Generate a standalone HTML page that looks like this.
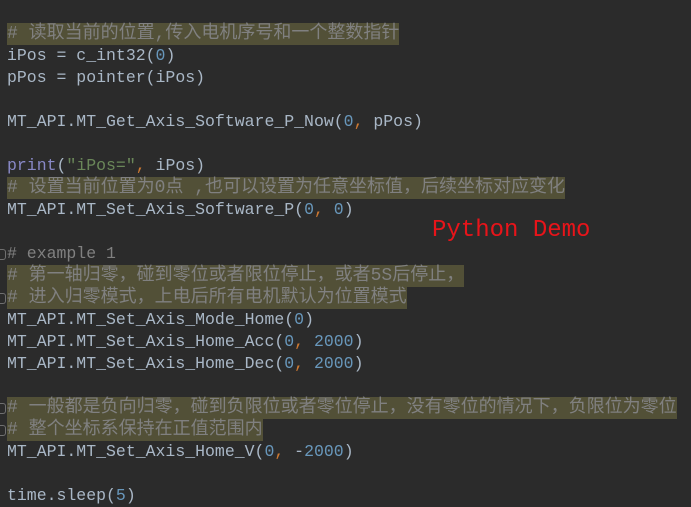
<!DOCTYPE html>
<html><head><meta charset="utf-8"><style>
html,body{margin:0;padding:0;background:#2b2b2b;width:691px;height:507px;overflow:hidden}
.code{position:absolute;left:7px;top:23px;font-family:"Liberation Mono","Noto Sans CJK SC",monospace;font-size:16.5px;line-height:22px;color:#a9b7c6}
.l{height:22px;white-space:pre;overflow:visible}
.c{color:#808080}
.h{background:#525037;display:inline-block;height:22px;font-size:18px;line-height:22px;vertical-align:top}
.n{color:#6897bb}
.k{color:#cc7832}
.s{color:#6a8759}
.p{color:#8888c6}
.demo{position:absolute;left:432px;top:217px;font-family:"Liberation Mono",monospace;font-size:24px;line-height:28px;color:#e8141a;white-space:pre}
.f{position:absolute;left:0;width:5px;height:9px;border:1px solid #707070;border-left:none;border-radius:0 3px 3px 0}
</style></head><body>
<div class="code"><div class="l"><span class="h c"># 读取当前的位置,传入电机序号和一个整数指针</span></div><div class="l">iPos = c_int32(<span class="n">0</span>)</div><div class="l">pPos = pointer(iPos)</div><div class="l"> </div><div class="l">MT_API.MT_Get_Axis_Software_P_Now(<span class="n">0</span><span class="k">,</span> pPos)</div><div class="l"> </div><div class="l"><span class="p">print</span>(<span class="s">"iPos="</span><span class="k">,</span> iPos)</div><div class="l"><span class="h c"># 设置当前位置为0点 ,也可以设置为任意坐标值，后续坐标对应变化</span></div><div class="l">MT_API.MT_Set_Axis_Software_P(<span class="n">0</span><span class="k">,</span> <span class="n">0</span>)</div><div class="l"> </div><div class="l"><span class="c"># example 1</span></div><div class="l"><span class="h c"># 第一轴归零，碰到零位或者限位停止，或者5S后停止，</span></div><div class="l"><span class="h c"># 进入归零模式，上电后所有电机默认为位置模式</span></div><div class="l">MT_API.MT_Set_Axis_Mode_Home(<span class="n">0</span>)</div><div class="l">MT_API.MT_Set_Axis_Home_Acc(<span class="n">0</span><span class="k">,</span> <span class="n">2000</span>)</div><div class="l">MT_API.MT_Set_Axis_Home_Dec(<span class="n">0</span><span class="k">,</span> <span class="n">2000</span>)</div><div class="l"> </div><div class="l"><span class="h c"># 一般都是负向归零，碰到负限位或者零位停止，没有零位的情况下，负限位为零位</span></div><div class="l"><span class="h c"># 整个坐标系保持在正值范围内</span></div><div class="l">MT_API.MT_Set_Axis_Home_V(<span class="n">0</span><span class="k">,</span> -<span class="n">2000</span>)</div><div class="l"> </div><div class="l">time.sleep(<span class="n">5</span>)</div></div>
<div class="f" style="top:249px"></div>
<div class="f" style="top:293px"></div>
<div class="f" style="top:403px"></div>
<div class="f" style="top:425px"></div>
<div class="demo">Python Demo</div>
</body></html>
